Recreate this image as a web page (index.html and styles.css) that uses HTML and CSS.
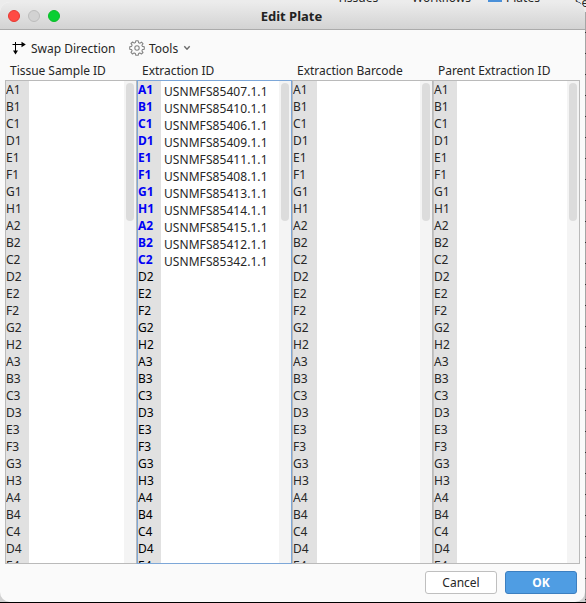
FILE: index.html
```
<!DOCTYPE html>
<html lang="en">
<head>
<meta charset="utf-8">
<title>Edit Plate</title>
<link rel="stylesheet" href="styles.css">
</head>
<body>
<div class="behind-top"><span class="tab t1">Tissues</span><span class="tab t2">Workflows</span><i class="blue"></i><span class="tab t3">Plates</span><span class="tab t4">Se</span></div>
<div class="behind-right"></div>
<main class="window">
  <header class="titlebar">
    <div class="lights"><i class="red"></i><i class="gray"></i><i class="green"></i></div>
    <h1>Edit Plate</h1>
  </header>
  <nav class="toolbar">
    <button class="tool swap">
      <svg width="14" height="14" viewBox="0 0 14 14"><path d="M.5 3.5H11M3.5 1V11" stroke="#000" stroke-width="1" fill="none"/><path d="M9.5 .8L13.8 3.5L9.5 6.2ZM1 9.5L3.5 13.5L6 9.5Z"/></svg>
      <span>Swap Direction</span>
    </button>
    <button class="tool tools">
      <svg width="16" height="16" viewBox="0 0 16 16" fill="none" stroke="#858585" stroke-width="1.1" stroke-linejoin="round"><path d="M6.8 .8H9.2L9.6 2.7L10.9 3.2L12.5 2.1L14 3.6L12.9 5.2L13.4 6.4L15.3 6.8V9.2L13.4 9.6L12.9 10.9L14 12.5L12.4 14L10.8 12.9L9.6 13.4L9.2 15.3H6.8L6.4 13.4L5.1 12.9L3.5 14L2 12.4L3.1 10.8L2.6 9.6L.7 9.2V6.8L2.6 6.4L3.1 5.1L2 3.5L3.6 2L5.2 3.1L6.4 2.6Z"/><circle cx="8" cy="8" r="2.2"/></svg>
      <span>Tools</span>
      <svg class="chev" width="8" height="6" viewBox="0 0 8 6"><path d="M1.3 1.2L4 4.2L6.7 1.2" fill="none" stroke="#6a6a6a" stroke-width="1.4"/></svg>
    </button>
  </nav>
  <div class="heads"><span>Tissue Sample ID</span><span>Extraction ID</span><span>Extraction Barcode</span><span>Parent Extraction ID</span></div>
  <div class="lists">
    <section class="list"><div class="wells"></div><div class="values"></div><div class="scroll"><i></i></div></section>
    <section class="list active"><div class="wells"></div><div class="values"><p>USNMFS85407.1.1</p><p>USNMFS85410.1.1</p><p>USNMFS85406.1.1</p><p>USNMFS85409.1.1</p><p>USNMFS85411.1.1</p><p>USNMFS85408.1.1</p><p>USNMFS85413.1.1</p><p>USNMFS85414.1.1</p><p>USNMFS85415.1.1</p><p>USNMFS85412.1.1</p><p>USNMFS85342.1.1</p></div><div class="scroll"><i></i></div></section>
    <section class="list"><div class="wells"></div><div class="values"></div><div class="scroll"><i></i></div></section>
    <section class="list"><div class="wells"></div><div class="values"></div><div class="scroll"><i></i></div></section>
  </div>
  <footer><button class="btn">Cancel</button><button class="btn ok">OK</button></footer>
</main>
<script src="app.js"></script>
</body>
</html>
```
FILE: app.js
```
// Fill each gutter with well names, marking the wells that hold a value.
document.querySelectorAll('.list').forEach(function (list) {
  var gutter = list.querySelector('.wells');
  var filled = list.querySelectorAll('.values p').length;
  for (var i = 0; i < 29; i++) {
    var p = document.createElement('p');
    p.textContent = 'ABCDEFGH'[i % 8] + (Math.floor(i / 8) + 1);
    if (i < filled) p.className = 'filled';
    gutter.appendChild(p);
  }
});
```
FILE: styles.css
```
* { box-sizing: border-box; margin: 0; padding: 0; }
body { width: 586px; height: 603px; overflow: hidden; position: relative; background: #d0d0d0; border-bottom: 1px solid #000; font: 12px/17px "Noto Sans", sans-serif; color: #262626; }
.behind-top { position: absolute; left: 0; top: 0; width: 586px; height: 12px; overflow: hidden; background: #ececec; }
.tab { position: absolute; top: -11px; font-size: 12px; line-height: 17px; }
.t1 { left: 337px; }
.t2 { left: 412px; }
.t3 { left: 506px; }
.t4 { left: 575px; top: -6px; }
.blue { position: absolute; left: 488px; top: 0; width: 14px; height: 3px; background: #4a90d9; }
.behind-right { position: absolute; right: 0; top: 12px; width: 1px; height: 590px; background: repeating-linear-gradient(#a5a5a5 0 20px, #333 20px 21px); }
.window { position: relative; width: 585px; height: 600px; margin-top: 2px; border-radius: 10px; overflow: hidden; background: #fafafa; display: flex; flex-direction: column; }
.titlebar { height: 28px; flex: none; display: flex; align-items: center; background: linear-gradient(#ececec, #d3d3d3); border-bottom: 1px solid #ababab; }
.lights { display: flex; gap: 8px; padding-left: 8px; width: 84px; }
.lights i { width: 12px; height: 12px; border-radius: 50%; border: 1px solid; }
.lights .red { background: #ff4b44; border-color: #e53932; }
.lights .gray { background: #d2d2d2; border-color: #bcbcbc; }
.lights .green { background: #08cf32; border-color: #0abc28; }
h1 { flex: 1; padding-right: 86px; text-align: center; font-size: 13px; line-height: 18px; font-weight: 700; color: #222; }
.toolbar { height: 34px; flex: none; display: flex; padding: 2px 0 0 12px; }
button { font: inherit; color: inherit; background: none; border: 0; }
.tool { display: flex; align-items: center; }
.swap { width: 117px; gap: 5px; }
.tools { gap: 4px; }
.chev { margin-left: 1px; }
.heads { height: 16px; flex: none; display: grid; grid-template-columns: 132px 155px 141px 1fr; padding-left: 10px; line-height: 14px; letter-spacing: -0.03px; white-space: nowrap; }
.lists { height: 484px; flex: none; display: grid; grid-template-columns: 131px 156px 140px 148px; margin-left: 5px; }
.list { display: flex; overflow: hidden; background: #fff; border: 1px solid #bababa; border-right-width: 0; }
.list:last-child { border-right-width: 1px; }
.list.active { border: 1px solid #7da7d8; border-left-color: #bababa; }
.list.active .wells { border-left: 1px solid #7da7d8; width: 24px; color: #000; }
.list:last-child .wells { border-left: 1px solid #c3c3c3; width: 24px; }
.wells { width: 23px; flex: none; background: #e1e1e1; }
.list:nth-child(3) .wells { width: 24px; }
.wells p { height: 17px; line-height: 17px; }
.wells .filled { color: #0000f5; font-weight: 700; }
.values { flex: 1; padding: 2px 0 0 3px; white-space: nowrap; letter-spacing: 0.06px; }
.values p { height: 17px; }
.scroll { width: 12px; flex: none; background: #f4f4f4; padding: 2px 2px 0; }
.scroll i { display: block; height: 138px; border-radius: 4px; background: #dcdcdc; }
footer { display: flex; justify-content: flex-end; gap: 8px; padding: 7px 8px 0 0; }
.btn { width: 72px; height: 23px; border: 1px solid #bfbfbf; border-radius: 3px; background: #fff; line-height: 20px; text-align: center; }
.ok { background: #4f9de3; border-color: #3c7fc0; color: #fff; font-weight: 700; }
```
